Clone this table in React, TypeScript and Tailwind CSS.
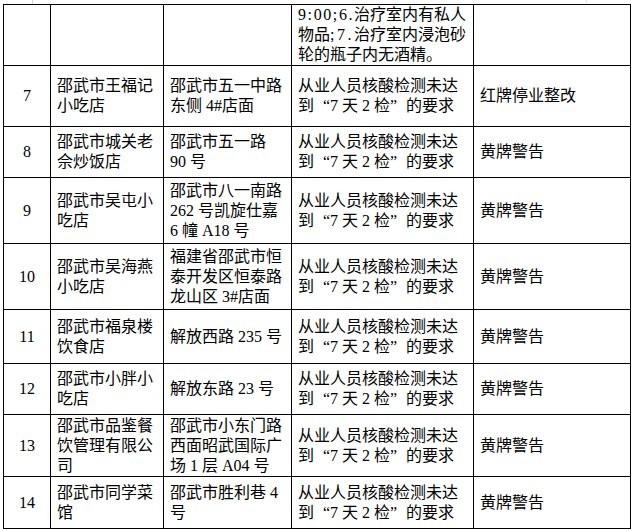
import React from 'react';

// Full-width curly quotes, the way the Chinese font sets them
const OpenQ = () => <span className="inline-block w-[16px] text-right">“</span>;
const CloseQ = () => <span className="inline-block w-[16px] text-left">”</span>;

const Requirement = () => (
    <>
        从业人员核酸检测未达
        <br />
        到<OpenQ />7 天 2 检<CloseQ />的要求
    </>
);

type Row = {
    no: string;
    name: string[];
    address: string[];
    result: string;
    height: string;
};

const rows: Row[] = [
    { no: '7', name: ['邵武市王福记', '小吃店'], address: ['邵武市五一中路', '东侧 4#店面'], result: '红牌停业整改', height: 'h-[61px]' },
    { no: '8', name: ['邵武市城关老', '佘炒饭店'], address: ['邵武市五一路', '90 号'], result: '黄牌警告', height: 'h-[51px]' },
    { no: '9', name: ['邵武市吴屯小', '吃店'], address: ['邵武市八一南路', '262 号凯旋仕嘉', '6 幢 A18 号'], result: '黄牌警告', height: 'h-[66px]' },
    { no: '10', name: ['邵武市吴海燕', '小吃店'], address: ['福建省邵武市恒', '泰开发区恒泰路', '龙山区 3#店面'], result: '黄牌警告', height: 'h-[66px]' },
    { no: '11', name: ['邵武市福泉楼', '饮食店'], address: ['解放西路 235 号'], result: '黄牌警告', height: 'h-[54px]' },
    { no: '12', name: ['邵武市小胖小', '吃店'], address: ['解放东路 23 号'], result: '黄牌警告', height: 'h-[51px]' },
    { no: '13', name: ['邵武市品鉴餐', '饮管理有限公', '司'], address: ['邵武市小东门路', '西面昭武国际广', '场 1 层 A04 号'], result: '黄牌警告', height: 'h-[62px]' },
    { no: '14', name: ['邵武市同学菜', '馆'], address: ['邵武市胜利巷 4', '号'], result: '黄牌警告', height: 'h-[52px]' },
];

const Lines = ({ lines }: { lines: string[] }) => (
    <>
        {lines.map((l, i) => (
            <React.Fragment key={i}>
                {i > 0 && <br />}
                {l}
            </React.Fragment>
        ))}
    </>
);

const base = 'border border-black px-[6px] py-0 align-middle whitespace-nowrap overflow-hidden';
const cell = `${base} text-left`;
const numCell = `${base} text-center`;

export default function App() {
    return (
        <div
            className="w-[633px] h-[531px] bg-white text-black text-[16px] leading-[20px] overflow-hidden"
            style={{ fontFamily: '"Liberation Serif", "Noto Sans CJK SC", serif' }}
        >
            {/* page margin marks above the table */}
            <div className="flex h-[4px]">
                <div className="w-[32px]" />
                <div className="w-px bg-gray-300" />
                <div className="flex-1" />
                <div className="w-px bg-gray-200" />
                <div className="w-[46px]" />
            </div>

            <table className="ml-[3px] w-[627px] table-fixed border-collapse">
                <colgroup>
                    <col className="w-[47px]" />
                    <col className="w-[113px]" />
                    <col className="w-[128px]" />
                    <col className="w-[182px]" />
                    <col className="w-[157px]" />
                </colgroup>
                <tbody>
                    <tr className="h-[61px]">
                        <td className={cell} />
                        <td className={cell} />
                        <td className={cell} />
                        <td className={cell}>
                            <span className="tracking-[1.6px]">9:00;6.</span>治疗室内有私人
                            <br />
                            物品<span className="tracking-[2.5px]">;7.</span>治疗室内浸泡砂
                            <br />
                            轮的瓶子内无酒精。
                        </td>
                        <td className={cell} />
                    </tr>
                    {rows.map((r) => (
                        <tr key={r.no} className={r.height}>
                            <td className={numCell}>{r.no}</td>
                            <td className={cell}>
                                <Lines lines={r.name} />
                            </td>
                            <td className={cell}>
                                <Lines lines={r.address} />
                            </td>
                            <td className={cell}>
                                <Requirement />
                            </td>
                            <td className={cell}>{r.result}</td>
                        </tr>
                    ))}
                </tbody>
            </table>
        </div>
    );
}
